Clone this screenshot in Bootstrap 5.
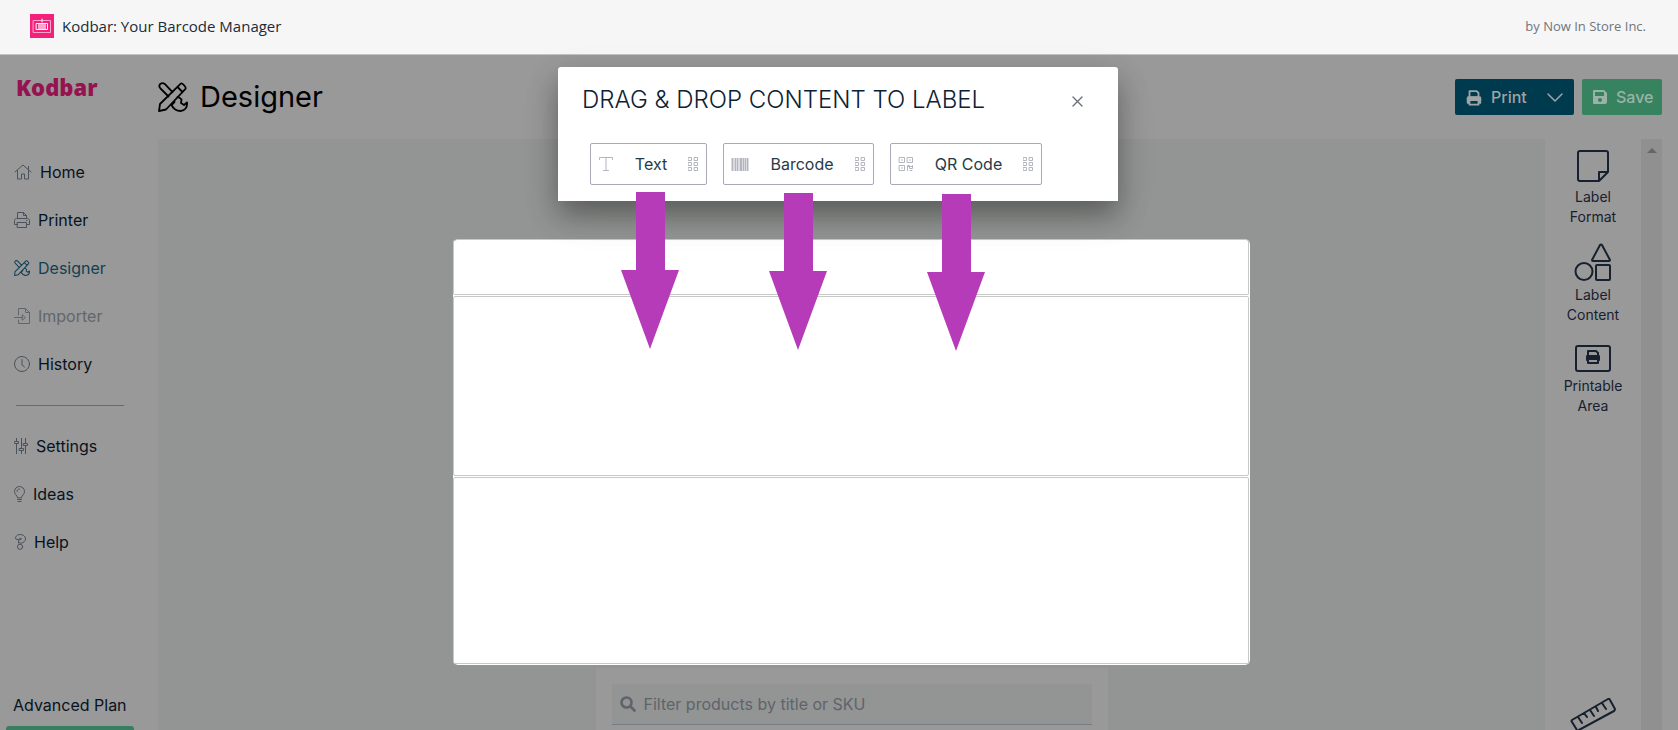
<!DOCTYPE html>
<html lang="en">
<head>
<meta charset="utf-8">
<meta name="viewport" content="width=device-width, initial-scale=1">
<title>Kodbar: Your Barcode Manager</title>
<link href="https://cdn.jsdelivr.net/npm/bootstrap@5.3.0/dist/css/bootstrap.min.css" rel="stylesheet">
<style>
  body { font-family: Inter, "Noto Sans", sans-serif; font-size: 16px; line-height: 24px; background: #999; color: #07131f; }
  svg { display: block; flex: none; fill: none; stroke: currentColor; stroke-linecap: round; stroke-linejoin: round; }
  .topbar { height: 55px; padding: 0 32px 3px 30px; background: #f6f6f6; border-bottom: 1px solid #c4c4c4; font-family: "Open Sans", sans-serif; font-size: 15px; color: #212b36; }
  .topbar .byline { font-size: 13px; color: #70757c; }
  .sidebar { width: 158px; padding: 17px 14px 0; }
  .brand { font: 800 22px/30px "Open Sans", sans-serif; color: #95134f; padding-left: 2px; height: 76px; }
  .side-link { height: 48px; display: flex; align-items: center; gap: 8px; color: #07131f; text-decoration: none; }
  .side-link svg { color: #4b525c; }
  .side-link.current, .side-link.current svg { color: #123f52; }
  .side-link.off, .side-link.off svg { color: #62666b; }
  .side-rule { width: 108px; border-top: 1px solid #656a75; margin: 17px 0 16px 2px; }
  .plan { padding-bottom: 9px; margin-left: -1px; }
  .plan-bar { height: 4px; width: 128px; margin-left: -8px; background: #387e60; border-radius: 3px 3px 0 0; }
  .page-title { font-size: 29px; line-height: 36px; font-weight: 400; color: #000; }
  .work-head { height: 84px; padding-bottom: 8px; }
  .act { height: 36px; border: 0; border-radius: 2px; font-weight: 500; color: #9fa4a6; display: flex; align-items: center; gap: 8px; }
  .act-print { background: #003a4f; }
  .act-main { width: 82px; padding: 0 0 0 10px; border-radius: 2px 0 0 2px; }
  .act-caret { width: 37px; padding: 0 10px; border-radius: 0 2px 2px 0; }
  .act-save { background: #37835f; color: #9bb3a6; width: 80px; padding: 0 10px; }
  .stage { background: #929593; padding-top: 100px; }
  .label-sheet { width: 797px; max-width: 100%; background: #fff; border-radius: 5px; padding: 0 1px 1px 0; display: grid; gap: 1px; grid-template-rows: 55px 180px 187px; border-top: 1px solid #c8c8c8; }
  .label-sheet div { border: 1px solid #c8c8c8; border-radius: 2px; }
  .label-sheet div:first-child { border-top: 0; }
  .finder { width: 512px; background: #999; margin-top: 3px; padding: 16px 16px 20px; }
  .finder-box { height: 41px; background: #929593; border-bottom: 1px solid #787c86; padding: 0 8px; color: #5f636c; }
  .finder-box input { border: 0; background: transparent; outline: 0; width: 100%; padding: 0; color: inherit; }
  .finder-box input::placeholder { color: #5f636c; opacity: 1; }
  .tools { width: 96px; padding-top: 10px; font-size: 14px; line-height: 20px; }
  .tool { border: 0; background: none; padding: 0; width: 100%; color: #17202e; text-align: center; }
  .tool + .tool { margin-top: 16px; }
  .tool svg { margin: 0 auto 4px; }
  .scroller { width: 21px; background: #909090; margin-right: 16px; padding-top: 9px; }
  .scroller::before { content: ""; display: block; margin: 0 auto; width: 10px; border: 5px solid transparent; border-top: 0; border-bottom-color: #666; }
  .drop-panel { position: absolute; top: 67px; left: 0; right: 2px; margin: auto; width: 560px; height: 134px; background: #fff; border-radius: 3px 3px 0 0; box-shadow: 0 14px 28px rgba(0,0,0,.34), 0 14px 50px rgba(0,0,0,.06); padding: 17px 24px; }
  .drop-panel h2 { font-size: 24px; line-height: 32px; font-weight: 300; color: #0c2234; margin: 0 0 27px; }
  .chip { height: 42px; border: 1px solid #a9a9b8; border-radius: 2px; background: #fff; color: #273a48; padding: 0 7px; display: flex; align-items: center; justify-content: space-between; }
  .chip svg { color: #b3b5c0; }
  .chip-text { width: 117px; } .chip-bar { width: 151px; } .chip-qr { width: 152px; }
  .shut { border: 0; background: none; padding: 0; margin-right: 11px; color: #69727c; }
  .arrows { position: absolute; left: 63px; top: 125px; fill: #b63bb9; stroke: none; }
</style>
</head>
<body class="vh-100 overflow-hidden d-flex flex-column position-relative">
<svg width="0" height="0" class="position-absolute">
  <symbol id="tools" viewBox="0 0 30 30"><path d="M10.500 14.500 2.500 6.500C-.5 3 3.500-.500 7 2.200l7.500 8M16.500 20l-3 3c2 4 5 6 9 6 4-.500 7-3 6.500-8.500l-3 2.500-3-2 .5-3.500c-1.500-1-2-2.500-4-2.500M1 29l1-7L22.500 1.800c1.500-1.400 6 3 5 5L8 27.500zM19.500 5l5 5"/></symbol>
  <symbol id="grip" viewBox="0 0 11 15"><path stroke-linejoin="miter" d="M.5.5h3v3h-3zM6.500.5h3v3h-3zM.5 5.500h3v3h-3zM6.500 5.500h3v3h-3zM.5 10.500h3v3h-3zM6.500 10.500h3v3h-3z"/></symbol>
</svg>

<header class="topbar d-flex align-items-center flex-shrink-0">
  <svg width="24" height="24" viewBox="0 0 24 24" stroke="none"><path fill="#f4207c" stroke="none" d="M0 0h24v24H0z"/><path d="M3.500 6.500h17v12h-17z" stroke="#fba6cb"/><path d="M6.500 9.500h11v6h-11zM12 5v3" stroke="#fff"/><path fill="#fba6cb" stroke="none" d="M8 10h8v5H8z"/></svg>
  <span class="ms-2">Kodbar: Your Barcode Manager</span>
  <span class="byline ms-auto">by Now In Store Inc.</span>
</header>

<div class="d-flex flex-grow-1 overflow-hidden">
  <nav class="sidebar d-flex flex-column flex-shrink-0">
    <div class="brand">Kodbar</div>
    <div class="d-flex flex-column">
      <a class="side-link" href="#"><svg width="18" height="16" viewBox="0 0 18 16"><path d="M1 8 9 1l8 7M3.500 6.500V15h4v-5h3v5h4V6.500M14.500 5.500V2.500"/></svg>Home</a>
      <a class="side-link" href="#"><svg width="16" height="16" viewBox="0 0 16 16"><path d="M3.500 6.500v-6h6l3 3v3M9.500.5v3h3M3.500 12.500h-3v-4c0-1 1-2 2-2h11c1 0 2 1 2 2v4h-3M3.500 10.500h9v5h-9zM12.500 8.500h.5"/></svg>Printer</a>
      <a class="side-link current" href="#"><svg width="16" height="16" stroke-width="1.900"><use href="#tools"/></svg>Designer</a>
      <a class="side-link off" href="#"><svg width="16" height="16" viewBox="0 0 16 16"><path d="M4.500 7V.5h7l4 4v11h-11V12M11.500.5v4h4M.5 9.500h8M8.500 7l3 2.500-3 2.500z"/></svg>Importer</a>
      <a class="side-link" href="#"><svg width="16" height="16" viewBox="0 0 16 16"><circle cx="8" cy="8" r="7.500"/><path d="M8 3.500V9l2.500 2"/></svg>History</a>
    </div>
    <div class="side-rule"></div>
    <div class="d-flex flex-column">
      <a class="side-link" href="#"><svg width="14" height="16" viewBox="0 0 14 16"><path d="M2.500 0v3M2.500 6v10M7.500 0v10M7.500 13v3M11.500 0v5M11.500 8v8M.5 3.500h4v2h-4zM5.500 10.500h4v2h-4zM9.500 5.500h4v2h-4z"/></svg>Settings</a>
      <a class="side-link" href="#"><svg width="11" height="16" viewBox="0 0 11 16"><path d="M3.500 11.500C3 9 .5 8.500.5 5.500a5 5 0 0 1 10 0c0 3-2.500 3.500-3 6zM3.500 13.500h4M4 15.500h3M3 5.500C3 4 4 3 5.500 3"/></svg>Ideas</a>
      <a class="side-link" href="#"><svg width="12" height="16" viewBox="0 0 12 16"><path d="M1.500 4.500C1 3 3 .5 6 .5c3 0 5.500 1.500 5.500 4.500 0 2.500-2.500 3.500-3.500 4H4.500V6.500L7.500 5c0-1-2-1-3 .5z"/><circle cx="6" cy="12.800" r="2.600"/></svg>Help</a>
    </div>
    <div class="plan mt-auto">Advanced Plan</div>
    <div class="plan-bar flex-shrink-0"></div>
  </nav>

  <main class="flex-grow-1 d-flex flex-column">
    <div class="work-head d-flex align-items-center flex-shrink-0 pe-3">
      <svg width="30" height="30" stroke-width="1.800" color="#000" class="mt-2"><use href="#tools"/></svg>
      <h1 class="page-title mb-0 mt-2 ms-2 ps-1">Designer</h1>
      <div class="d-flex gap-2 ms-auto mt-2">
        <div class="d-flex">
          <button class="act act-print act-main" type="button"><svg width="18" height="17" viewBox="0 0 20 18" stroke-width="2"><path d="M5 8V2h8l2 2v4M5 15H3v-4c0-1.500 1-2.500 2.500-2.500h9c1.500 0 2.500 1 2.500 2.500v4h-2M5 12h10v5H5z"/><path d="M3 9h14v3H3z" fill="currentColor"/></svg>Print</button>
          <button class="act act-print act-caret" type="button" aria-label="Print options"><svg width="16" height="9" viewBox="0 0 16 9" stroke-width="1.500"><path d="m1 1 7 7 7-7"/></svg></button>
        </div>
        <button class="act act-save" type="button"><svg width="16" height="16" viewBox="0 0 16 16" stroke="none"><path fill="currentColor" fill-rule="evenodd" stroke="none" d="M2 1h10l3 3v9c0 1-1 2-2 2H2c-1 0-1-1-1-1V2c0-1 1-1 1-1zm1 2v4h9V3zm5 6a2 2 0 1 0 .01 0z"/></svg>Save</button>
      </div>
    </div>
    <div class="d-flex flex-grow-1 overflow-hidden">
      <section class="stage flex-grow-1 d-flex flex-column align-items-center">
        <div class="label-sheet flex-shrink-0"><div></div><div></div><div></div></div>
        <div class="finder flex-shrink-0">
          <label class="finder-box d-flex align-items-center gap-2"><svg width="16" height="16" viewBox="0 0 16 16" stroke-width="2.600"><circle cx="6.500" cy="6.500" r="5"/><path d="m10.500 10.500 4 4"/></svg><input type="text" aria-label="Filter products" placeholder="Filter products by title or SKU"></label>
        </div>
      </section>
      <aside class="tools flex-shrink-0 d-flex flex-column">
        <button class="tool" type="button"><svg width="34" height="34" viewBox="0 0 34 34" stroke-width="2"><path d="M4 2h26q2 0 2 2v19l-9 9H4q-2 0-2-2V4q0-2 2-2zM23 32v-9h9"/></svg>Label<br>Format</button>
        <button class="tool" type="button"><svg width="38" height="38" viewBox="0 0 38 38" stroke-width="2"><path d="M26 2q1-1 2 0l8 15q0 1-1 1H19q-1 0-1-1zM23 22h12q1 0 1 1v13q0 1-1 1H23q-1 0-1-1V23q0-1 1-1z"/><circle cx="10" cy="28.500" r="8.500"/></svg>Label<br>Content</button>
        <button class="tool pt-1" type="button"><svg width="36" height="27" viewBox="0 0 36 27" stroke-width="2"><rect x="1" y="1" width="34" height="25" rx="2"/><path d="M13 11V6h8l2 2v3M12 15v-4h12v4M13 14h10v4H13zM12 12h12"/></svg>Printable<br>Area</button>
        <button class="tool mt-auto" type="button" aria-label="Ruler"><svg class="mb-0" width="46" height="32" viewBox="0 0 46 32" stroke-width="2"><path d="M2 22 38 1q1-1 2 1l5 9q0 1-1 2L9 32M2 22q-1 1 0 2l5 8M8 19l4 6M14 15l3 4M20 12l4 6M26 9l2 4M32 5l4 6"/></svg></button>
      </aside>
      <div class="scroller flex-shrink-0"></div>
    </div>
  </main>
</div>

<section class="drop-panel" aria-label="Label content">
  <div class="d-flex align-items-start justify-content-between">
    <h2>DRAG &amp; DROP CONTENT TO LABEL</h2>
    <button class="shut mt-2 pt-1" type="button" aria-label="Close"><svg width="11" height="11" viewBox="0 0 11 11" stroke-width="1.400"><path d="m1 1 9 9M10 1l-9 9"/></svg></button>
  </div>
  <div class="d-flex gap-3 ps-2">
    <button class="chip chip-text" type="button"><svg width="16" height="16" viewBox="0 0 16 16"><path d="M1.500 3.500v-2h13v2M8 1.500v13M5.500 14.500h5"/></svg><span>Text</span><svg width="11" height="15"><use href="#grip"/></svg></button>
    <button class="chip chip-bar" type="button"><svg width="18" height="13" viewBox="0 0 18 13"><path fill="#d9dbe1" stroke="none" d="M0 0h18v13H0z"/><path fill="#b3b5c0" stroke="none" d="M1 0h1v13H1zM4 0h1v13H4zM6 0h1v13H6zM9 0h2v13H9zM12 0h1v13h-1zM14 0h1v13h-1zM16 0h1v13h-1z"/></svg><span>Barcode</span><svg width="11" height="15"><use href="#grip"/></svg></button>
    <button class="chip chip-qr" type="button"><svg width="16" height="16" viewBox="0 0 16 16"><path stroke-linejoin="miter" d="M1.500 1.500h5v5h-5zM9.500 1.500h5v5h-5zM1.500 9.500h5v5h-5zM3.500 4h1M11.500 4h1M3.500 12h1M9.500 14.500v-5h2v3h3v-3M10 10.500h4M12 14.500h2"/></svg><span>QR Code</span><svg width="11" height="15"><use href="#grip"/></svg></button>
  </div>
  <svg class="arrows" width="364" height="160" viewBox="0 0 364 160"><path d="M15 0h29v78h14L29 157 0 78h15zM163 1h29v78h14l-29 79-29-79h15zM321 2h29v78h14l-29 79-29-79h15z"/></svg>
</section>
<script src="https://cdn.jsdelivr.net/npm/bootstrap@5.3.0/dist/js/bootstrap.bundle.min.js"></script>
</body>
</html>
